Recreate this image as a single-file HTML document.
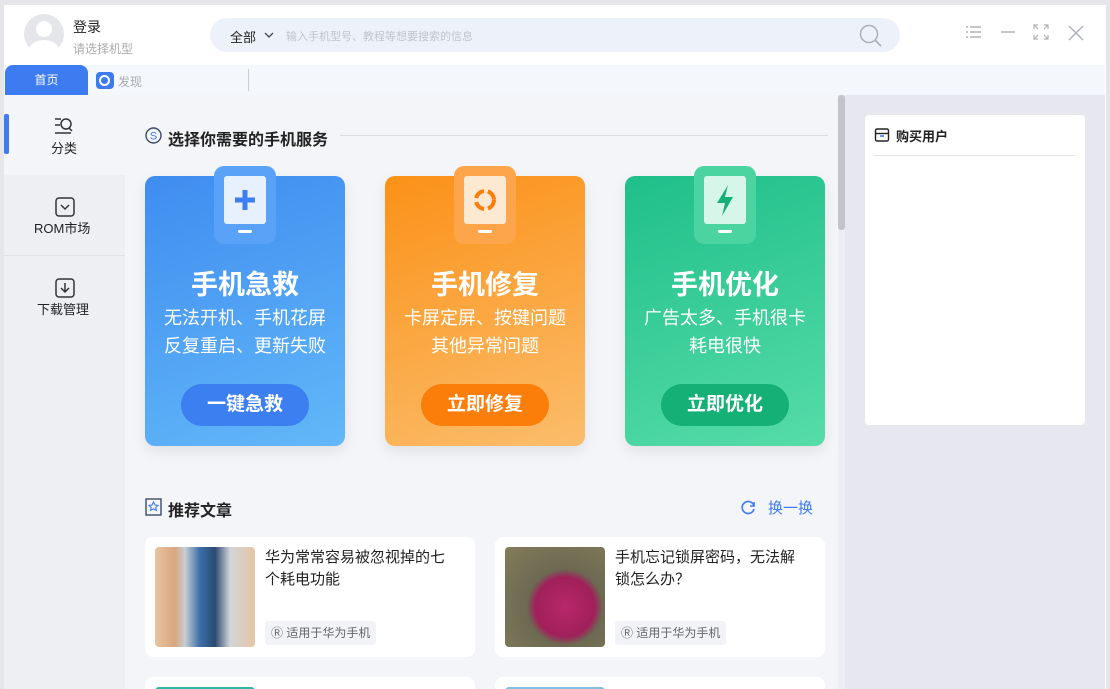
<!DOCTYPE html>
<html><head><meta charset="utf-8"><style>
*{margin:0;padding:0;box-sizing:border-box}
html,body{width:1110px;height:689px;overflow:hidden}
body{background:#fff;font-family:"Liberation Sans","Noto Sans CJK SC",sans-serif;color:#222}
#w{position:relative;width:1110px;height:689px;overflow:hidden}
.abs{position:absolute}
.card{position:absolute;top:176px;width:200px;height:270px;border-radius:10px;color:#fff;text-align:center;box-shadow:0 6px 14px rgba(0,0,0,.08);overflow:hidden}
.card h2{position:absolute;top:87px;width:100%;font-size:27px;font-weight:bold}
.card p{position:absolute;top:128px;width:100%;font-size:18px;line-height:28px}
.card .btn{position:absolute;left:36px;top:208px;width:128px;height:42px;border-radius:21px;font-size:19px;font-weight:bold;line-height:42px}
.ph{position:absolute;top:166px;width:62px;height:78px;border-radius:10px}
.ph .scr{position:absolute;left:10px;top:10px;width:42px;height:48px;border-radius:3px}
.ph .bar{position:absolute;left:24px;top:64px;width:14px;height:3px;background:#fff;border-radius:2px}
.art{position:absolute;width:330px;height:120px;background:#fff;border-radius:8px;overflow:hidden}
.art .img{position:absolute;left:10px;top:10px;width:100px;height:100px;border-radius:4px}
.art .t{position:absolute;left:120px;top:10px;width:190px;font-size:15px;line-height:22px;color:#222}
.art .tag{position:absolute;left:120px;top:84px;height:24px;padding:0 6px;background:#f2f3f6;border-radius:3px;font-size:12px;color:#666;line-height:24px}
</style></head><body><div id="w">
<div class="abs" style="left:0;top:0;width:1110px;height:689px;border:4px solid #e6e6ea;border-top-width:5px;border-bottom:none"></div>
<div class="abs" style="left:24px;top:14px;width:40px;height:40px;border-radius:50%;background:#e4e6ea;overflow:hidden">
 <div class="abs" style="left:12px;top:7px;width:16px;height:16px;border-radius:50%;background:#fff"></div>
 <div class="abs" style="left:5px;top:26px;width:30px;height:20px;border-radius:50%;background:#fff"></div>
</div>
<div class="abs" style="left:73px;top:17px;font-size:14px;color:#222">登录</div>
<div class="abs" style="left:73px;top:40px;font-size:12px;color:#aaa">请选择机型</div>
<div class="abs" style="left:210px;top:18px;width:690px;height:34px;border-radius:17px;background:#edf1f9"></div>
<div class="abs" style="left:230px;top:27px;font-size:13px;color:#222">全部</div>
<svg class="abs" style="left:263px;top:30px" width="12" height="10"><path d="M2 3l4 4 4-4" stroke="#444" fill="none" stroke-width="1.3"/></svg>
<div class="abs" style="left:286px;top:28px;font-size:11px;color:#c0c4cc">输入手机型号、教程等想要搜索的信息</div>
<svg class="abs" style="left:858px;top:23px" width="26" height="26"><circle cx="11" cy="11" r="8.5" stroke="#a8afbb" stroke-width="1.5" fill="none"/><path d="M17 17l6 6" stroke="#a8afbb" stroke-width="1.6"/></svg>
<svg class="abs" style="left:965px;top:24px" width="18" height="16"><g stroke="#aeb2bb" stroke-width="1.4"><path d="M1 3h2M5 3h11M1 8h2M5 8h11M1 13h2M5 13h11"/></g></svg>
<svg class="abs" style="left:1000px;top:24px" width="16" height="16"><path d="M1 8h14" stroke="#aeb2bb" stroke-width="1.5"/></svg>
<svg class="abs" style="left:1033px;top:24px" width="16" height="16"><g stroke="#aeb2bb" stroke-width="1.2" fill="none"><path d="M1 5V1h4M1 1l4 4M15 5V1h-4M15 1l-4 4M1 11v4h4M1 15l4-4M15 11v4h-4M15 15l-4-4"/></g></svg>
<svg class="abs" style="left:1067px;top:24px" width="18" height="18"><path d="M2 2l14 14M16 2L2 16" stroke="#aeb2bb" stroke-width="1.5"/></svg>
<div class="abs" style="left:4px;top:65px;width:1101px;height:30px;background:#f4f7fc"></div>
<div class="abs" style="left:5px;top:65px;width:83px;height:30px;background:#3d7bf0;border-radius:8px 8px 0 0;color:#fff;font-size:12px;text-align:center;line-height:30px">首页</div>
<div class="abs" style="left:96px;top:72px;width:18px;height:17px;border-radius:4px;background:#3d7bf0"><div class="abs" style="left:3px;top:3px;width:11px;height:11px;border-radius:50%;border:2.5px solid #fff"></div></div>
<div class="abs" style="left:118px;top:73px;font-size:12px;color:#aaa">发现</div>
<div class="abs" style="left:248px;top:69px;width:1px;height:22px;background:#ccc"></div>
<div class="abs" style="left:4px;top:95px;width:121px;height:594px;background:#eeeff3"></div>
<div class="abs" style="left:4px;top:95px;width:121px;height:80px;background:#f4f5f8"></div>
<div class="abs" style="left:4px;top:114px;width:5px;height:40px;background:#3d7bf0;border-radius:2px"></div>
<svg class="abs" style="left:53px;top:116px" width="24" height="22"><g stroke="#333" stroke-width="1.5" fill="none"><path d="M2 3h6M2 9h5M2 17h16"/><circle cx="13" cy="8" r="5"/><path d="M16 12l3 3"/></g></svg>
<div class="abs" style="left:51px;top:138px;font-size:13px">分类</div>
<div class="abs" style="left:4px;top:255px;width:121px;height:1px;background:#e0e1e6"></div>
<svg class="abs" style="left:55px;top:197px" width="20" height="20"><rect x="1" y="1" width="18" height="18" rx="3" stroke="#333" stroke-width="1.5" fill="none"/><path d="M6 8l4 4 4-4" stroke="#333" stroke-width="1.5" fill="none"/></svg>
<div class="abs" style="left:34px;top:218px;font-size:13px">ROM市场</div>
<svg class="abs" style="left:55px;top:278px" width="20" height="20"><rect x="1" y="1" width="18" height="18" rx="3" stroke="#333" stroke-width="1.5" fill="none"/><path d="M10 5v9M6 10l4 4 4-4" stroke="#333" stroke-width="1.5" fill="none"/></svg>
<div class="abs" style="left:37px;top:299px;font-size:13px">下载管理</div>
<div class="abs" style="left:125px;top:95px;width:713px;height:594px;background:#f4f5f8"></div>
<div class="abs" style="left:838px;top:95px;width:7px;height:594px;background:#eeeef2"></div>
<div class="abs" style="left:838px;top:95px;width:7px;height:135px;background:#c2c4c9;border-radius:3px"></div>
<div class="abs" style="left:845px;top:95px;width:260px;height:594px;background:#e7e7ef"></div>
<div class="abs" style="left:865px;top:115px;width:220px;height:310px;background:#fff;border-radius:4px"></div>
<svg class="abs" style="left:874px;top:127px" width="16" height="16"><rect x="1.5" y="2" width="13" height="12" rx="1.5" stroke="#222" stroke-width="1.4" fill="none"/><path d="M1.5 6.5h13" stroke="#222" stroke-width="1.4"/><path d="M6 9h4" stroke="#3d7bf0" stroke-width="1.6"/></svg>
<div class="abs" style="left:896px;top:126px;font-size:13px;font-weight:bold;color:#222">购买用户</div>
<div class="abs" style="left:874px;top:155px;width:201px;height:1px;background:#e2e2e6"></div>
<svg class="abs" style="left:145px;top:127px" width="17" height="17"><circle cx="8.5" cy="8.5" r="7.5" stroke="#3a4a6a" stroke-width="1.4" fill="none"/><text x="8.5" y="12.5" font-size="11" text-anchor="middle" fill="#3d7bf0" font-family="Liberation Sans">S</text></svg>
<div class="abs" style="left:168px;top:126px;font-size:16px;font-weight:bold;color:#222">选择你需要的手机服务</div>
<div class="abs" style="left:340px;top:135px;width:488px;height:1px;background:#dcdde2"></div>
<div class="card" style="left:145px;background:linear-gradient(160deg,#3f8cf0,#62b8f8)"><h2>手机急救</h2><p>无法开机、手机花屏<br>反复重启、更新失败</p><div class="btn" style="background:#3c7ff0">一键急救</div></div>
<div class="card" style="left:385px;background:linear-gradient(160deg,#fb9118,#fbbd6b)"><h2>手机修复</h2><p>卡屏定屏、按键问题<br>其他异常问题</p><div class="btn" style="background:#fb7d0a">立即修复</div></div>
<div class="card" style="left:625px;background:linear-gradient(160deg,#1fbf8a,#56dca9)"><h2>手机优化</h2><p>广告太多、手机很卡<br>耗电很快</p><div class="btn" style="background:#15b076">立即优化</div></div>
<div class="ph" style="left:214px;background:#5aa2f7"><div class="scr" style="background:#e6f1fd"><svg width="42" height="48"><path d="M21 14v20M11 24h20" stroke="#3c7ff0" stroke-width="5"/></svg></div><div class="bar"></div></div>
<div class="ph" style="left:454px;background:#fca54a"><div class="scr" style="background:#fde8d2"><svg width="42" height="48"><circle cx="21" cy="24" r="9" stroke="#fb7d0a" stroke-width="4" fill="none" stroke-dasharray="11 4"/></svg></div><div class="bar"></div></div>
<div class="ph" style="left:694px;background:#4bd4a0"><div class="scr" style="background:#d6f6ea"><svg width="42" height="48"><path d="M24 9L13 27h8l-3 13 11-19h-8z" fill="#15b076"/></svg></div><div class="bar"></div></div>
<svg class="abs" style="left:145px;top:498px" width="17" height="18"><rect x="1" y="1" width="15" height="16" stroke="#3a4a6a" stroke-width="1.4" fill="none"/><path d="M8.5 4l1.5 3 3 .4-2.2 2 .6 3-2.9-1.5-2.9 1.5.6-3-2.2-2 3-.4z" stroke="#3d7bf0" stroke-width="1.1" fill="none"/></svg>
<div class="abs" style="left:168px;top:497px;font-size:16px;font-weight:bold;color:#222">推荐文章</div>
<svg class="abs" style="left:740px;top:499px" width="17" height="17"><path d="M14 7A6 6 0 1 0 14 10" stroke="#3d7bf0" stroke-width="1.6" fill="none"/><path d="M14 3v4h-4" stroke="#3d7bf0" stroke-width="1.6" fill="none"/></svg>
<div class="abs" style="left:768px;top:497px;font-size:15px;color:#3d7bf0">换一换</div>
<div class="art" style="left:145px;top:537px"><div class="img" style="background:linear-gradient(90deg,#e8c4a0 0,#d9a67f 20%,#c8cdd4 30%,#3b6fa8 45%,#2a4a70 60%,#d2d5da 75%,#e6c5a2 100%)"></div><div class="t">华为常常容易被忽视掉的七个耗电功能</div><div class="tag">Ⓡ 适用于华为手机</div></div>
<div class="art" style="left:495px;top:537px"><div class="img" style="background:radial-gradient(circle at 60% 60%,#b8286a 0,#a0205a 35%,#6c6a52 45%,#857c5a 100%)"></div><div class="t">手机忘记锁屏密码，无法解锁怎么办？</div><div class="tag">Ⓡ 适用于华为手机</div></div>
<div class="art" style="left:145px;top:677px;height:12px;border-radius:8px 8px 0 0"><div class="img" style="background:#2fb6a8"></div></div>
<div class="art" style="left:495px;top:677px;height:12px;border-radius:8px 8px 0 0"><div class="img" style="background:#7fc0e0"></div></div>
</div></body></html>
